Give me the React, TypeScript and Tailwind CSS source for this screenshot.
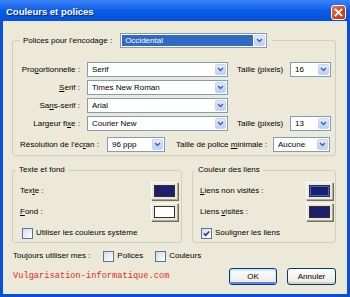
import clsx from 'clsx'

const FONT = "font-['Liberation_Sans',Arial,sans-serif]"

const Chevron = () => (
  <svg width="7" height="5" viewBox="0 0 7 5">
    <path d="M1 1 L3.5 3.5 L6 1" fill="none" stroke="#4d6185" strokeWidth="1.4" />
  </svg>
)

function Select({ value, className, active }: { value: string; className: string; active?: boolean }) {
  return (
    <div className={clsx('h-[15px] shrink-0 border border-[#7f9db9] bg-white flex p-[1px] gap-[1px]', className)}>
      <div className={clsx('flex-1 flex items-center pl-[3px] leading-none', active ? 'bg-[#316ac5] text-white' : 'text-black')}>
        {value}
      </div>
      <div className="w-[11px] rounded-[2px] border border-[#c3d3fd] bg-gradient-to-b from-[#e1eafe] to-[#b9cffb] flex items-center justify-center">
        <Chevron />
      </div>
    </div>
  )
}

function Checkbox({ checked }: { checked?: boolean }) {
  return (
    <span className="w-[11px] h-[11px] shrink-0 border border-[#52769e] bg-gradient-to-br from-[#d6dbe3] to-white flex items-center justify-center">
      {checked && (
        <svg width="7" height="7" viewBox="0 0 7 7">
          <path d="M0.8 3.4 L2.7 5.3 L6.2 1.6" fill="none" stroke="#2e3a5a" strokeWidth="1.5" />
        </svg>
      )}
    </span>
  )
}

function Swatch({ color, focus }: { color: string; focus?: boolean }) {
  return (
    <div className="w-[27px] h-[18px] p-[2px] border border-white border-r-[#aca899] border-b-[#aca899] shadow-[1px_1px_0_#716f64] bg-[#ece9d8]">
      <div
        className={clsx(
          'w-full h-full border border-[#303030]',
          color,
          focus && 'shadow-[inset_0_0_0_1px_#2f64f0]'
        )}
      />
    </div>
  )
}

export default function App() {
  return (
    <div className={clsx('w-[350px] h-[297px] bg-[#0b4fd8] flex flex-col text-[8px] text-black', FONT)}>
      {/* title bar */}
      <div className="h-[21px] shrink-0 flex items-center justify-between pt-[3px] pl-[6px] pr-[4px] bg-gradient-to-b from-[#3a83f6] via-[#0a5de8] to-[#0450dd]">
        <span className="text-white font-bold text-[9.5px] leading-none [text-shadow:1px_1px_0_#0a2a8a]">Couleurs et polices</span>
        <div className="w-[15px] h-[15px] rounded-[3px] border border-white bg-gradient-to-br from-[#e9795a] via-[#d9481e] to-[#c03310] flex items-center justify-center">
          <svg width="9" height="9" viewBox="0 0 9 9">
            <path d="M1.5 1.5 L7.5 7.5 M7.5 1.5 L1.5 7.5" stroke="white" strokeWidth="1.8" strokeLinecap="square" />
          </svg>
        </div>
      </div>

      <div className="flex-1 mx-[3px] mb-[3px] bg-[#ece9d8] pl-[9px] pr-[11px] pt-[12px] flex flex-col">
        {/* polices */}
        <fieldset className="border border-[#d0d0bf] rounded-[3px] pb-[3px]">
          <legend className="ml-[7px] pl-[3px] pr-[5px] flex items-center">
            <span>Polices pour l'encodage :</span>
            <Select value="Occidental" active className="w-[147px] ml-[8px]" />
          </legend>

          <div className="pt-[14px] flex flex-col gap-[3px]">
            <div className="flex items-center">
              <span className="w-[67px] text-right">Pro<u>p</u>ortionnelle :</span>
              <Select value="Serif" className="w-[141px] ml-[7px]" />
              <span className="w-[53px] ml-[9px]">Taille (pixels)</span>
              <Select value="16" className="w-[41px]" />
            </div>
            <div className="flex items-center">
              <span className="w-[67px] text-right"><u>S</u>erif :</span>
              <Select value="Times New Roman" className="w-[141px] ml-[7px]" />
            </div>
            <div className="flex items-center">
              <span className="w-[67px] text-right">Sa<u>n</u>s-serif :</span>
              <Select value="Arial" className="w-[141px] ml-[7px]" />
            </div>
            <div className="flex items-center">
              <span className="w-[67px] text-right">Largeur fi<u>x</u>e :</span>
              <Select value="Courier New" className="w-[141px] ml-[7px]" />
              <span className="w-[53px] ml-[9px]">Taille (pixels)</span>
              <Select value="13" className="w-[41px]" />
            </div>
            <div className="flex items-center mt-[3px] pl-[7px]">
              <span className="w-[87px]">Résolution de l'éc<u>r</u>an :</span>
              <Select value="96 ppp" className="w-[58px]" />
              <span className="w-[97px] ml-[11px]">Taille de police <u>m</u>inimale :</span>
              <Select value="Aucune" className="w-[57px]" />
            </div>
          </div>
        </fieldset>

        {/* couleurs */}
        <div className="flex gap-[10px] mt-[8px]">
          <fieldset className="w-[170px] border border-[#d0d0bf] rounded-[3px] pl-[7px] pr-[3px] pb-[3px]">
            <legend className="ml-[-4px] px-[3px]">Texte et fond</legend>
            <div className="pt-[6px] flex flex-col">
              <div className="flex items-center justify-between">
                <span>Tex<u>t</u>e :</span>
                <Swatch color="bg-[#1e1e6e]" />
              </div>
              <div className="flex items-center justify-between mt-[3px]">
                <span><u>F</u>ond :</span>
                <Swatch color="bg-white" />
              </div>
              <div className="flex items-center gap-[3px] mt-[6px] ml-[2px]">
                <Checkbox />
                <span>Utiliser les couleurs système</span>
              </div>
            </div>
          </fieldset>

          <fieldset className="flex-1 border border-[#d0d0bf] rounded-[3px] pl-[7px] pr-[2px] pb-[3px]">
            <legend className="ml-[-5px] px-[3px]">Couleur des liens</legend>
            <div className="pt-[6px] flex flex-col">
              <div className="flex items-center justify-between">
                <span><u>L</u>iens non visités :</span>
                <Swatch color="bg-[#1c1c6c]" focus />
              </div>
              <div className="flex items-center justify-between mt-[3px]">
                <span>Liens <u>v</u>isités :</span>
                <Swatch color="bg-[#1e1e6e]" />
              </div>
              <div className="flex items-center gap-[3px] mt-[6px] ml-[1px]">
                <Checkbox checked />
                <span>Souligner les liens</span>
              </div>
            </div>
          </fieldset>
        </div>

        {/* toujours utiliser */}
        <div className="flex items-center mt-[7px] ml-[1px]">
          <span>Toujours utiliser mes :</span>
          <span className="ml-[13px]"><Checkbox /></span>
          <span className="ml-[3px]">Polices</span>
          <span className="ml-[12px]"><Checkbox /></span>
          <span className="ml-[3px]">Couleurs</span>
        </div>

        <div className="flex items-center justify-between mt-[6px]">
          <span className="ml-[1px] font-['Liberation_Mono',monospace] text-[8.7px] text-[#e02a2a]">Vulgarisation-informatique.com</span>
          <div className="flex gap-[10px]">
            <button className="w-[48px] h-[17px] rounded-[3px] border border-[#003c74] bg-gradient-to-b from-white to-[#ece9e0] shadow-[inset_0_1px_0_1px_#cee7ff,inset_0_-1px_0_1px_#6982ee]">
              OK
            </button>
            <button className="w-[49px] h-[17px] rounded-[3px] border border-[#003c74] bg-gradient-to-b from-white to-[#ece9e0] shadow-[inset_0_-2px_0_#d6d0c5]">
              Annuler
            </button>
          </div>
        </div>
      </div>
    </div>
  )
}
